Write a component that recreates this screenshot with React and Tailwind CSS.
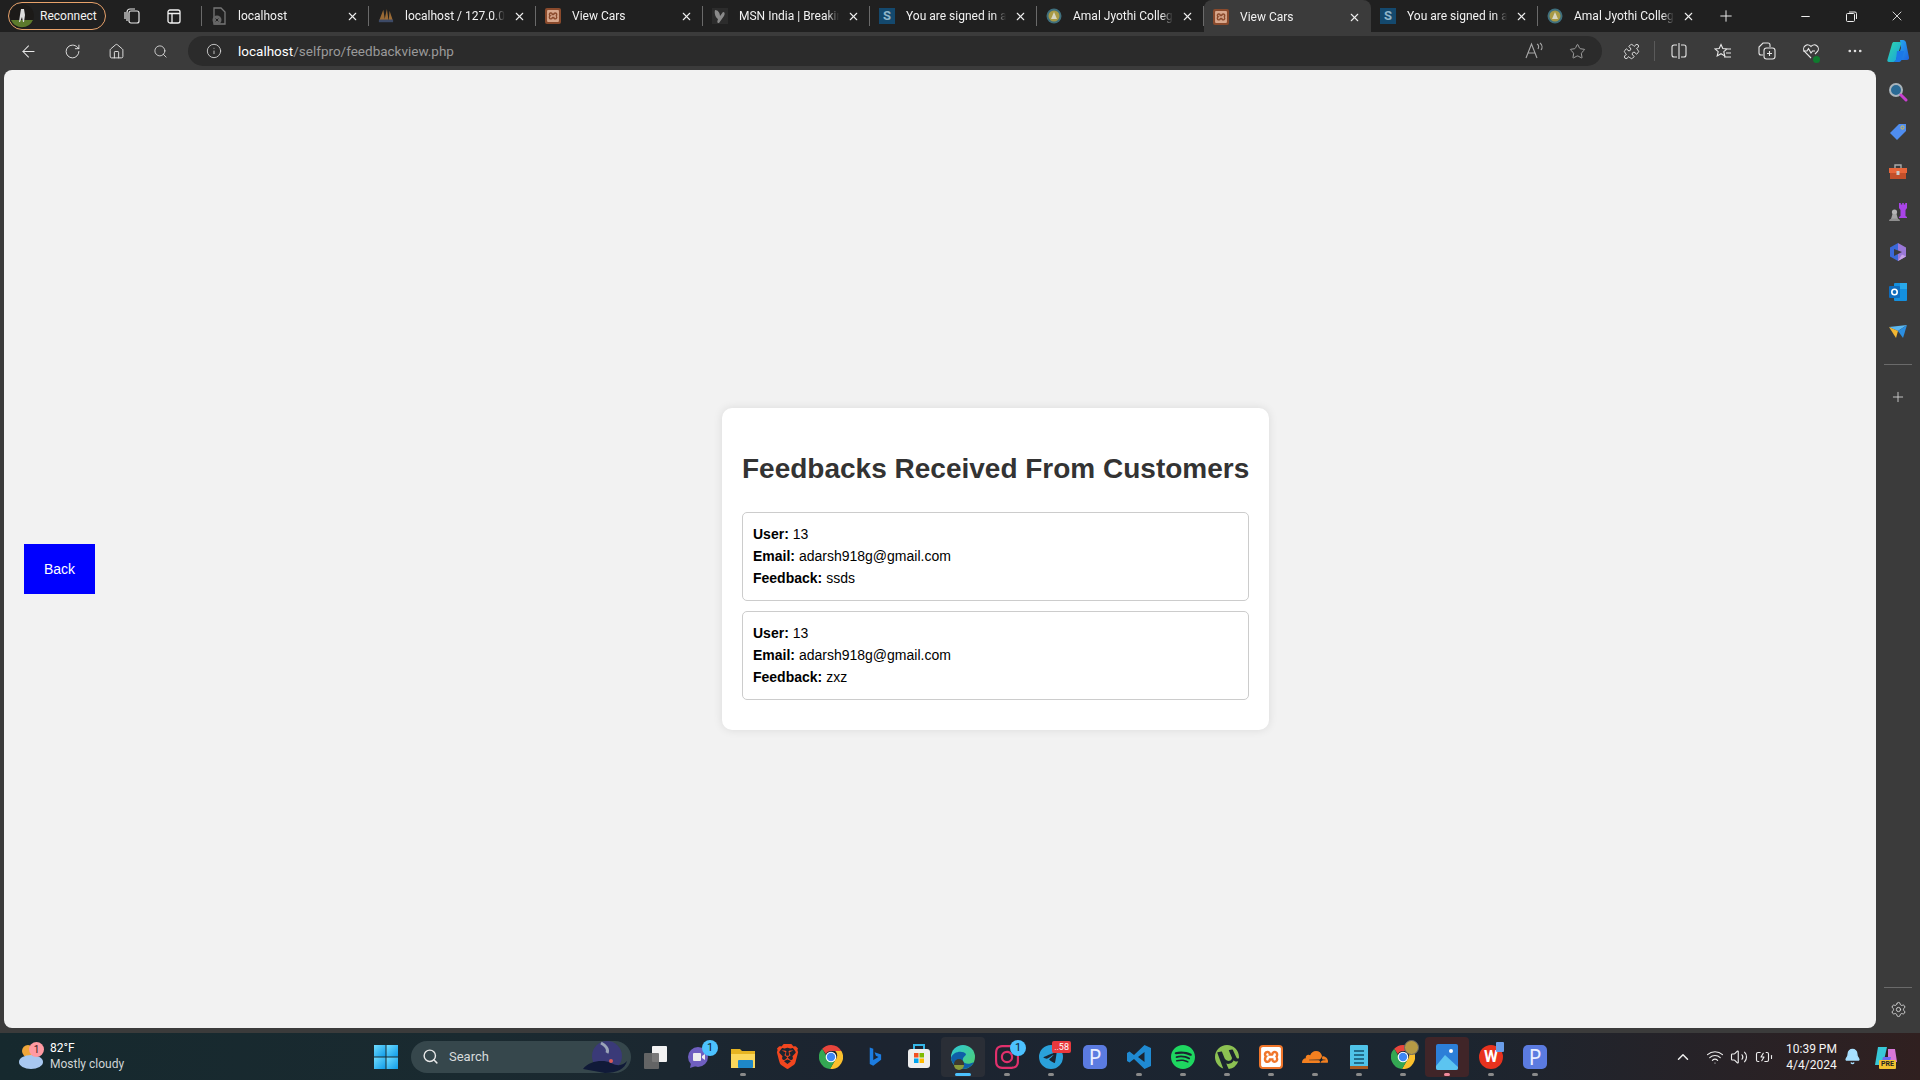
import { ArrowLeft, RotateCw, House, Search, Info, Star, Puzzle, Plus, X, Minus, MoreHorizontal, Wifi, Volume2, BatteryCharging, ChevronUp, Bell, Settings } from 'lucide-react'
import { SiBrave, SiSpotify, SiUtorrent, SiXampp, SiCloudflare, SiTelegram, SiInstagram } from 'react-icons/si'

const uiFont = "font-['Roboto','Noto_Sans',sans-serif]"

// favicons
const XamppFav = () => (
  <span className="w-[16px] h-[16px] rounded-[2px] bg-[#8a4a2c] flex items-center justify-center">
    <SiXampp className="text-[#d8a78c]" size={12} />
  </span>
)
const DocFav = () => (
  <svg width="16" height="18" viewBox="0 0 16 18" fill="none">
    <path d="M3 1h7l4 4v12H3z" stroke="#777" strokeWidth="1.3" />
    <circle cx="6" cy="13" r="4.5" fill="#666" />
    <path d="M4.6 11.6l2.8 2.8M7.4 11.6l-2.8 2.8" stroke="#222" strokeWidth="1" />
  </svg>
)
const PmaFav = () => (
  <svg width="18" height="18" viewBox="0 0 18 18">
    <path d="M1 15L6 2l2 13zM7 15L10 1l2 14zM12 15l1-12 4 12z" fill="#9a6a35" />
    <rect x="1" y="13" width="16" height="3" fill="#3d4a66" />
  </svg>
)
const MsnFav = () => (
  <span className="w-[16px] h-[16px] bg-[#2c2c2c] flex items-center justify-center">
    <svg width="14" height="15" viewBox="0 0 14 15"><path d="M2 1c3 0 5 3 5 6l3-4c2 0 2 2 1 4l-5 7c-2 0-2-1-1-4C3 9 1 5 2 1z" fill="#8a8a8a" /></svg>
  </span>
)
const SFav = () => (
  <span className="w-[16px] h-[16px] bg-[#14496e] text-[#8fb4c9] text-[13px] leading-[16px] font-bold text-center">S</span>
)
const AjFav = () => (
  <svg width="16" height="16" viewBox="0 0 16 16">
    <circle cx="8" cy="8" r="7.5" fill="#3f6f7d" />
    <circle cx="8" cy="8" r="5.5" fill="#a89a45" />
    <path d="M8 4l3 7H5z" fill="#d9d6c0" />
  </svg>
)

const tabs = [
  { title: 'localhost', Fav: DocFav },
  { title: 'localhost / 127.0.0.1', Fav: PmaFav },
  { title: 'View Cars', Fav: XamppFav },
  { title: 'MSN India | Breakin', Fav: MsnFav },
  { title: 'You are signed in a', Fav: SFav },
  { title: 'Amal Jyothi College', Fav: AjFav },
  { title: 'View Cars', Fav: XamppFav, active: true },
  { title: 'You are signed in a', Fav: SFav },
  { title: 'Amal Jyothi College', Fav: AjFav },
]

function Tab({ title, Fav, active, last }) {
  return (
    <div className={`relative w-[167px] flex items-center pl-[8px] shrink-0 ${active ? 'bg-[#3b3b3b] rounded-t-lg h-[34px]' : 'h-[32px]'}`}>
      <span className="w-[16px] flex justify-center shrink-0 ml-[1px]"><Fav /></span>
      <span className="ml-[11px] w-[100px] shrink-0 overflow-hidden whitespace-nowrap text-[12px] text-[#f2f2f2] [mask-image:linear-gradient(to_right,black_88%,transparent)]">{title}</span>
      <span className="w-[28px] flex justify-center shrink-0"><X size={13} color="#eee" /></span>
      {!active && !last && <span className="absolute right-0 top-[6px] h-[20px] w-px bg-[#6a6a6a]" />}
    </div>
  )
}

const Cell = ({ children, className = '' }) => (
  <div className={`w-[44px] h-[30px] flex items-center justify-center shrink-0 ${className}`}>{children}</div>
)

const CopilotLogo = ({ size = 24 }) => (
  <svg width={size} height={size} viewBox="0 0 24 24">
    <defs>
      <linearGradient id="cpa" x1="0" y1="0" x2="1" y2="1"><stop offset="0" stopColor="#2fd8a8" /><stop offset="1" stopColor="#18a0e0" /></linearGradient>
      <linearGradient id="cpb" x1="0" y1="0" x2="1" y2="1"><stop offset="0" stopColor="#28b0f0" /><stop offset="1" stopColor="#1d62e0" /></linearGradient>
    </defs>
    <path d="M14 1h3c1.500 0 2.500 1 3 2.500l3 15c.3 1.500-.5 2.500-2 2.500H11l4-12z" fill="url(#cpb)" />
    <path d="M8 3h6c1 0 1.500 1 1 2.500L10 21c-.5 1.500-1.500 2-3 2H3c-1.500 0-2-1-1.500-2.500L6 5c.5-1.500 1-2 2-2z" fill="url(#cpa)" />
    <path d="M11 12h7l-2 8c-.5 1.500-1.500 3-3 3H7c1.500 0 2.500-1 3-2.500z" fill="#1b78e8" />
  </svg>
)

const sideIcons = [
  <svg key="s" width="20" height="20" viewBox="0 0 20 20"><circle cx="8" cy="8" r="6" fill="#2a6a95" stroke="#a9b4bb" strokeWidth="2" /><path d="M13 13l5 5" stroke="#c83fd0" strokeWidth="3" strokeLinecap="round" /></svg>,
  <svg key="t" width="20" height="20" viewBox="0 0 20 20"><path d="M11 2h7v7l-9 9-7-7z" fill="#4f8df0" /><circle cx="14.5" cy="5.5" r="1.6" fill="#4f8df0" stroke="#e8c23a" strokeWidth="1" /></svg>,
  <svg key="b" width="20" height="20" viewBox="0 0 20 20"><path d="M7 6V3h6v3" fill="none" stroke="#aaa" strokeWidth="1.4" /><rect x="1" y="6" width="18" height="5" fill="#e8663a" /><rect x="2" y="11" width="16" height="6" fill="#c24f2a" /><rect x="8.5" y="9" width="3" height="4" fill="#ccc" /></svg>,
  <svg key="c" width="20" height="20" viewBox="0 0 20 20"><circle cx="6.5" cy="10" r="2.6" fill="#b5b5b5" /><path d="M4.5 12h4l1.500 5H3z" fill="#a5a5a5" /><path d="M1 19c0-2 2-2.500 5.500-2.500S12 17 12 19z" fill="#8f8f8f" /><path d="M11 1h1.800v1.500h1.400V1h1.600v1.500h1.400V1H19v5l-1.500 2v6l1.500 1v1h-8v-1l1.500-1V8L11 6z" fill="#a944e8" /></svg>,
  <svg key="m" width="20" height="20" viewBox="0 0 20 20"><path d="M10 1l8 4.500v9L10 19z" fill="#9a78d8" /><path d="M10 1L2 5.500v9l8 4.500z" fill="#3a68d8" /><path d="M6 7l8 3-8 4z" fill="#3b3b3b" /><path d="M10 19l8-4.500-4-2z" fill="#c8a4e8" /></svg>,
  <svg key="o" width="20" height="20" viewBox="0 0 20 20"><rect x="6" y="1" width="13" height="18" rx="1" fill="#1490df" /><rect x="12" y="1" width="7" height="6" fill="#28a8ea" /><rect x="1" y="4" width="11" height="12" rx="1" fill="#0f6cbd" /><circle cx="6.500" cy="10" r="2.700" fill="none" stroke="#fff" strokeWidth="1.600" /></svg>,
  <svg key="p" width="20" height="20" viewBox="0 0 20 20"><path d="M1 5l18-2-9 6z" fill="#5bb8f0" /><path d="M19 3l-4 13-5-7z" fill="#2b8ee0" /><path d="M1 5l9 4-2 7z" fill="#f2b632" /></svg>,
]

// taskbar icons, left to right
const WinLogo = () => (
  <svg width="24" height="24" viewBox="0 0 24 24">
    <defs><linearGradient id="wl" x1="0" y1="0" x2="1" y2="1"><stop offset="0" stopColor="#6fdcff" /><stop offset="1" stopColor="#0f9be8" /></linearGradient></defs>
    <rect x="0" y="0" width="11.500" height="11.500" fill="url(#wl)" />
    <rect x="12.500" y="0" width="11.500" height="11.500" fill="url(#wl)" />
    <rect x="0" y="12.500" width="11.500" height="11.500" fill="url(#wl)" />
    <rect x="12.500" y="12.500" width="11.500" height="11.500" fill="url(#wl)" />
  </svg>
)
const ChromeLogo = ({ size = 24 }) => (
  <svg width={size} height={size} viewBox="0 0 24 24">
    <path d="M12 0a12 12 0 0 1 10.400 6H12a6 6 0 0 0-5.200 3L3.200 3.800A12 12 0 0 1 12 0z" fill="#e8453c" />
    <path d="M22.400 6A12 12 0 0 1 11 24l5.200-9a6 6 0 0 0 0-9z" fill="#fbc02d" />
    <path d="M3.200 3.800L8 12a4.800 4.800 0 0 0 8.200 3L11 24A12 12 0 0 1 3.200 3.800z" fill="#34a853" />
    <circle cx="12" cy="12" r="5.300" fill="#fff" />
    <circle cx="12" cy="12" r="4.200" fill="#3f86f4" />
  </svg>
)
const PLogo = () => (
  <span className="w-[24px] h-[24px] rounded-[5px] bg-[#5b7be0] text-[#e8eeff] text-[21px] leading-[24px] text-center font-['Noto_Sans',sans-serif]">P</span>
)
const VsCodeLogo = () => (
  <svg width="24" height="24" viewBox="0 0 24 24">
    <path d="M17.500 0L24 3v18l-6.500 3L7 14l-4.500 3.500L0 16v-8l2.500-1.500L7 10zM17.500 7L11 12l6.500 5z" fill="#1f8ad2" fillRule="evenodd" />
  </svg>
)

const taskIcons = [
  { el: <svg width="24" height="24" viewBox="0 0 24 24"><rect x="9" y="1" width="15" height="16" rx="1" fill="#f2f2f2" /><rect x="1" y="8" width="15" height="16" rx="1" fill="#6b6b6b" fillOpacity="0.9" /></svg> },
  { el: <svg width="24" height="24" viewBox="0 0 24 24"><circle cx="11" cy="12" r="10" fill="#6f5fc0" /><path d="M4 18l-1 5 6-2z" fill="#6f5fc0" /><rect x="6" y="8" width="8" height="8" rx="1" fill="#eee" /><path d="M15 11l3-2v6l-3-2z" fill="#eee" /></svg>, badge: '1' },
  { el: <svg width="24" height="24" viewBox="0 0 24 24"><path d="M0 4h9l2 2h13v17H0z" fill="#e6b422" /><path d="M0 9h24v14H0z" fill="#fbd75b" /><rect x="7" y="15" width="15" height="8" rx="1" fill="#1e88c8" /></svg>, dot: true },
  { el: <SiBrave size={25} color="#f1461f" /> },
  { el: <ChromeLogo /> },
  { el: <svg width="14" height="20" viewBox="2 1 16 22"><path d="M4 1l4 1.500v13l6-3.500-3-1.500-1.500-4L17 9v6L8 22l-4-2z" fill="#1c7ce0" /></svg> },
  { el: <span className="w-[24px] h-[24px] relative"><svg width="24" height="26" viewBox="0 0 24 26" className="-mt-[2px]"><path d="M7 6V2h10v4" fill="none" stroke="#35b7e8" strokeWidth="2" /><rect x="1" y="6" width="22" height="19" rx="3" fill="#eeeeee" /><rect x="7" y="10" width="4.500" height="4.500" fill="#f25022" /><rect x="12.500" y="10" width="4.500" height="4.500" fill="#7fba00" /><rect x="7" y="15.500" width="4.500" height="4.500" fill="#00a4ef" /><rect x="12.500" y="15.500" width="4.500" height="4.500" fill="#ffb900" /></svg></span> },
  { el: <svg width="26" height="26" viewBox="0 0 26 26"><defs><linearGradient id="ed" x1="0" y1="0" x2="1" y2="1"><stop offset="0" stopColor="#2ec7d8" /><stop offset="1" stopColor="#4fd06a" /></linearGradient></defs><circle cx="13" cy="13" r="12" fill="url(#ed)" /><path d="M1 14c1 7 7 11 12 11s9-3 11-7c-5 3-10 2-11-1-1-4 3-5 3-7-3-4-13-3-15 4z" fill="#0f5fa8" /><circle cx="9" cy="20" r="5" fill="#3e3a2d" /><path d="M4 21a5 5 0 0 0 10 0z" fill="#8a9a3a" /></svg>, active: 'edge' },
  { el: <SiInstagram size={24} color="#e1306c" />, badge: '1', dot: true },
  { el: <SiTelegram size={24} color="#2aa1da" />, red: '..58', dot: true },
  { el: <PLogo /> },
  { el: <VsCodeLogo />, dot: true },
  { el: <SiSpotify size={24} color="#1ed760" />, dot: true },
  { el: <SiUtorrent size={24} color="#8cc152" />, dot: true },
  { el: <span className="w-[24px] h-[24px] rounded-[4px] bg-[#f0762b] flex items-center justify-center"><SiXampp size={20} color="#fff" /></span>, dot: true },
  { el: <SiCloudflare size={26} color="#f38020" />, dot: true },
  { el: <svg width="20" height="26" viewBox="0 0 20 26"><rect x="1" y="1" width="18" height="24" rx="1" fill="#4fc3e8" /><rect x="1" y="22" width="18" height="3" fill="#a85a20" /><path d="M5 7h10M5 11h10M5 15h10M5 19h10" stroke="#14506b" strokeWidth="1.500" /></svg>, dot: true },
  { el: <span className="relative"><ChromeLogo /><span className="absolute -right-[4px] -top-[5px] w-[15px] h-[15px] rounded-full bg-[#b59a45] border border-[#666]" /></span>, dot: true },
  { el: <svg width="22" height="26" viewBox="0 0 22 26"><rect width="22" height="26" rx="2" fill="#2c7fd8" /><circle cx="15" cy="7" r="2" fill="#fff" /><path d="M0 22l9-11 13 12v1a2 2 0 0 1-2 2H2a2 2 0 0 1-2-2z" fill="#5cc4f0" /></svg>, active: 'photos' },
  { el: <span className="relative w-[24px] h-[24px] rounded-full bg-[#e8321e] text-white text-[16px] leading-[24px] text-center font-bold">W<span className="absolute -right-[1px] -top-[3px] w-[8px] h-[10px] bg-[#6a9de8] rounded-[1px]" /></span>, dot: true },
  { el: <PLogo />, dot: true },
]

function TaskIcon({ el, badge, red, dot, active }) {
  return (
    <div className={`relative w-[44px] h-[40px] flex items-center justify-center shrink-0 rounded-[4px] ${active === 'edge' ? 'bg-[#2a2e36]' : ''} ${active === 'photos' ? 'bg-[#402528]' : ''}`}>
      {el}
      {badge && <span className="absolute right-[3px] top-[3px] w-[16px] h-[16px] rounded-full bg-[#4cc2ff] text-[#10222c] text-[11px] leading-[16px] text-center">{badge}</span>}
      {red && <span className="absolute right-[2px] top-[4px] px-[2px] h-[12px] rounded-[2px] bg-[#e8393d] text-white text-[9px] leading-[12px]">{red}</span>}
      {dot && <span className="absolute bottom-[1px] left-1/2 -translate-x-1/2 w-[6px] h-[3px] rounded-full bg-[#8a8a8a]" />}
      {active === 'edge' && <span className="absolute bottom-[1px] left-1/2 -translate-x-1/2 w-[16px] h-[3px] rounded-full bg-[#4cc2ff]" />}
      {active === 'photos' && <span className="absolute bottom-[1px] left-1/2 -translate-x-1/2 w-[6px] h-[3px] rounded-full bg-[#f08a9a]" />}
    </div>
  )
}

function FeedbackItem({ user, email, feedback }) {
  return (
    <div className="border border-[#cccccc] rounded-[5px] px-[10px] pt-[10px] pb-[11px] text-[14px] leading-[22px] text-black font-['Liberation_Sans',sans-serif]">
      <p><strong>User:</strong> {user}</p>
      <p><strong>Email:</strong> {email}</p>
      <p><strong>Feedback:</strong> {feedback}</p>
    </div>
  )
}

export default function App() {
  return (
    <div className={`w-[1920px] h-[1080px] flex flex-col overflow-hidden bg-[#3b3b3b] ${uiFont}`}>
      {/* tab strip */}
      <div className="h-[32px] bg-[#202020] flex items-start shrink-0">
        <div className="w-[202px] h-[32px] flex items-center shrink-0 relative">
          <div className="ml-[8px] w-[98px] h-[28px] rounded-full border border-[#e8a26a] flex items-center">
            <svg width="24" height="24" viewBox="0 0 24 24" className="ml-[1px]">
              <circle cx="12" cy="12" r="12" fill="#1c1a18" />
              <path d="M1 16h22a12 12 0 0 1-22 0z" fill="#5c7a2c" />
              <path d="M11 5h3l1 6-1 7h-1l-1-5-2 5H9l1-7z" fill="#ddd" />
            </svg>
            <span className="ml-[6px] text-[12px] text-[#f2f2f2]">Reconnect</span>
          </div>
          <span className="absolute left-[123px] top-[7px]">
            <svg width="18" height="18" viewBox="0 0 18 18" fill="none" stroke="#e8e8e8" strokeWidth="1.200"><rect x="6" y="4" width="10" height="12" rx="2" /><path d="M4 14V5a3 3 0 0 1 3-3h5M2 12V5" /></svg>
          </span>
          <span className="absolute left-[167px] top-[9px]">
            <svg width="14" height="15" viewBox="0 0 14 15" fill="none" stroke="#f2f2f2" strokeWidth="1.300"><rect x="1" y="1" width="12" height="13" rx="2" /><path d="M1 4.500h12M5 4.500V14" /></svg>
          </span>
          <span className="absolute right-0 top-[6px] h-[20px] w-px bg-[#6a6a6a]" />
        </div>
        {tabs.map((t, i) => <Tab key={i} {...t} last={i === tabs.length - 1} />)}
        <div className="w-[44px] h-[32px] flex items-center justify-center ml-[-1px]"><Plus size={18} color="#eee" strokeWidth={1.300} /></div>
        <div className="ml-auto flex h-[32px] items-center">
          <div className="w-[46px] flex justify-center"><Minus size={13} color="#eee" /></div>
          <div className="w-[46px] flex justify-center">
            <svg width="11" height="11" viewBox="0 0 11 11" fill="none" stroke="#eee"><rect x="0.500" y="2.500" width="8" height="8" rx="1" /><path d="M3 1h6a1.500 1.500 0 0 1 1.500 1.500V8" /></svg>
          </div>
          <div className="w-[46px] flex justify-center"><X size={16} color="#eee" strokeWidth={1.300} /></div>
        </div>
      </div>

      {/* toolbar */}
      <div className="h-[38px] flex items-start pt-[4px] pl-[6px] shrink-0">
        <Cell><ArrowLeft size={19} color="#e8e8e8" strokeWidth={1.300} /></Cell>
        <Cell><RotateCw size={17} color="#e8e8e8" strokeWidth={1.300} /></Cell>
        <Cell><House size={17} color="#e8e8e8" strokeWidth={1.300} /></Cell>
        <Cell><Search size={15} color="#e8e8e8" strokeWidth={1.300} /></Cell>
        <div className="ml-[6px] w-[1414px] h-[30px] rounded-full bg-[#2b2b2b] flex items-center shrink-0">
          <Info size={16} color="#d8d8d8" strokeWidth={1.300} className="ml-[18px]" />
          <span className="ml-[16px] text-[13.5px] text-white">localhost<span className="text-[#9a9a9a]">/selfpro/feedbackview.php</span></span>
          <div className="ml-auto flex items-center mr-[2px]">
            <Cell className="mr-[-2px]">
              <svg width="20" height="18" viewBox="0 0 20 18" fill="none" stroke="#a8a8a8" strokeWidth="1.100">
                <path d="M1 16L6.500 2 12 16M3 11h7" />
                <path d="M12 2c2 1 2 3 1 5M15 1c2.500 2 2.500 5 1 7" />
              </svg>
            </Cell>
            <Cell className="mr-[1px]"><Star size={17} color="#a8a8a8" strokeWidth={1.300} /></Cell>
          </div>
        </div>
        <Cell className="ml-[7px]"><Puzzle size={17} color="#e8e8e8" strokeWidth={1.300} /></Cell>
        <span className="w-px h-[20px] mt-[5px] bg-[#5a5a5a] mx-[1px]" />
        <Cell className="ml-[1px]">
          <svg width="16" height="16" viewBox="0 0 16 16" fill="none" stroke="#e8e8e8" strokeWidth="1.100">
            <path d="M6 2H3a2 2 0 0 0-2 2v8a2 2 0 0 0 2 2h3M10 2h3a2 2 0 0 1 2 2v8a2 2 0 0 1-2 2h-3M8 0v16" />
          </svg>
        </Cell>
        <Cell>
          <svg width="18" height="17" viewBox="0 0 18 17" fill="none" stroke="#e8e8e8" strokeWidth="1.100">
            <path d="M7 1.500l1.800 4 4.200.4-3.200 2.800 1 4.200L7 10.700l-3.800 2.200 1-4.200L1 5.900l4.200-.4zM12 6h5M12 10h5M10 14h7" />
          </svg>
        </Cell>
        <Cell>
          <svg width="18" height="18" viewBox="0 0 18 18" fill="none" stroke="#e8e8e8" strokeWidth="1.100">
            <path d="M5 13H3a2 2 0 0 1-2-2V5l4-4h5a2 2 0 0 1 2 2v2" />
            <rect x="6" y="6" width="11" height="11" rx="2.500" />
            <path d="M11.500 9v5M9 11.500h5" />
          </svg>
        </Cell>
        <Cell className="relative">
          <svg width="18" height="17" viewBox="0 0 18 17" fill="none" stroke="#e8e8e8" strokeWidth="1.100">
            <path d="M9 15L2.500 8.500A4 4 0 0 1 9 3.500a4 4 0 0 1 6.500 5L13 11" />
            <path d="M1 8h4l1.500-2.500L9 10l1.500-2H13" />
          </svg>
          <span className="absolute right-[13px] bottom-[3px] w-[7px] h-[7px] rounded-full bg-[#0f7b2e]" />
        </Cell>
        <Cell><MoreHorizontal size={18} color="#e8e8e8" strokeWidth={1.500} /></Cell>
        <div className="w-[42px] h-[30px] flex items-center justify-center"><CopilotLogo /></div>
      </div>

      {/* middle: page and side bar */}
      <div className="flex-1 flex min-h-0">
        <div className="w-[4px] shrink-0" />
        <main className="w-[1872px] h-[958px] rounded-lg bg-[#f2f2f2] flex items-center pt-[40px] font-['Liberation_Sans',sans-serif] shrink-0">
          <button className="ml-[20px] w-[71px] h-[50px] bg-[#0000ff] text-white text-[14px] shrink-0">Back</button>
          <section className="ml-[627px] w-[547px] h-[322px] bg-white rounded-[10px] shadow-[0_0_10px_rgba(0,0,0,0.1)] px-[20px] pt-[44px]">
            <h2 className="text-[28px] leading-[34px] font-bold text-[#333333] text-center whitespace-nowrap">Feedbacks Received From Customers</h2>
            <div className="mt-[26px] flex flex-col gap-[10px]">
              <FeedbackItem user="13" email="adarsh918g@gmail.com" feedback="ssds" />
              <FeedbackItem user="13" email="adarsh918g@gmail.com" feedback="zxz" />
            </div>
          </section>
        </main>
        <aside className="w-[44px] flex flex-col items-center pt-[2px] shrink-0">
          {sideIcons.map((ic, i) => <div key={i} className="h-[40px] flex items-center justify-center shrink-0">{ic}</div>)}
          <span className="w-[28px] h-px bg-[#6a6a6a] mt-[12px]" />
          <Plus size={16} color="#d8d8d8" strokeWidth={1.300} className="mt-[24px]" />
          <span className="w-[28px] h-px bg-[#6a6a6a] mt-auto mb-[13px]" />
          <Settings size={17} color="#d8d8d8" strokeWidth={1.300} className="mb-[10px]" />
        </aside>
      </div>

      {/* taskbar */}
      <footer className="h-[47px] mt-[5px] shrink-0 flex items-center bg-[linear-gradient(to_right,#16292e_0%,#1a2a30_25%,#1c2430_45%,#1b2530_75%,#302020_100%)] relative">
        <div className="w-[361px] shrink-0 flex items-center pl-[18px]">
          <div className="relative w-[24px] h-[28px]">
            <svg width="26" height="28" viewBox="0 0 26 28">
              <circle cx="10" cy="8" r="6" fill="#f0a63a" />
              <ellipse cx="13" cy="19" rx="12" ry="7" fill="#a8c8f0" />
            </svg>
            <span className="absolute left-[11px] -top-[1px] w-[15px] h-[15px] rounded-full bg-[#ff9aa2] text-[#3a1a1a] text-[10px] leading-[15px] text-center">1</span>
          </div>
          <div className="ml-[8px] -mt-[2px] text-[12px] leading-[16px]">
            <div className="text-white">82°F</div>
            <div className="text-[#d0d5d6]">Mostly cloudy</div>
          </div>
        </div>
        <div className="w-[50px] flex justify-center shrink-0"><WinLogo /></div>
        <div className="w-[220px] h-[32px] rounded-full bg-[#36474c] flex items-center relative shrink-0">
          <Search size={17} color="#e8e8e8" className="ml-[11px]" />
          <span className="ml-[10px] text-[13px] text-[#d8dcdc]">Search</span>
          <svg width="46" height="32" viewBox="0 0 46 32" className="absolute right-[2px] top-0">
            <circle cx="24" cy="15" r="15" fill="#3a3a78" />
            <path d="M0 28c6-8 20-10 28-6s12 2 16-2c-2 8-10 12-22 12z" fill="#101a38" />
            <path d="M18 2c4 2 8 6 6 10" stroke="#9aa4b8" strokeWidth="3" fill="none" />
            <circle cx="28" cy="20" r="2" fill="#d85a5a" />
          </svg>
        </div>
        <div className="flex ml-[2px] shrink-0">
          {taskIcons.map((t, i) => <TaskIcon key={i} {...t} />)}
        </div>
        <div className="flex-1 flex items-center text-white pl-[117px]">
          <ChevronUp size={18} color="#eee" />
          <Wifi size={18} color="#eee" strokeWidth={1.500} className="ml-[14px]" />
          <Volume2 size={18} color="#eee" strokeWidth={1.500} className="ml-[6px]" />
          <BatteryCharging size={18} color="#eee" strokeWidth={1.500} className="ml-[7px]" />
          <div className="ml-[13px] text-[12px] leading-[16px] text-center text-[#f5f5f5] whitespace-nowrap">
            <div>10:39 PM</div>
            <div>4/4/2024</div>
          </div>
          <Bell size={17} color="#a8e0ff" fill="#a8e0ff" className="ml-[7px]" />
          <span className="relative ml-[13px]">
            <svg width="24" height="24" viewBox="0 0 24 24">
              <path d="M4 2h9l-4 18H1z" fill="#38c8d8" />
              <path d="M14 4h7l2 13h-9z" fill="#d878d8" />
              <path d="M9 12h8l-2 8H7z" fill="#6a6af0" />
            </svg>
            <span className="absolute left-[5px] bottom-0 px-[2px] h-[9px] rounded-[1px] bg-[#f2c230] text-[#222] text-[7px] leading-[9px] font-bold">PRE</span>
          </span>
        </div>
      </footer>
    </div>
  )
}
